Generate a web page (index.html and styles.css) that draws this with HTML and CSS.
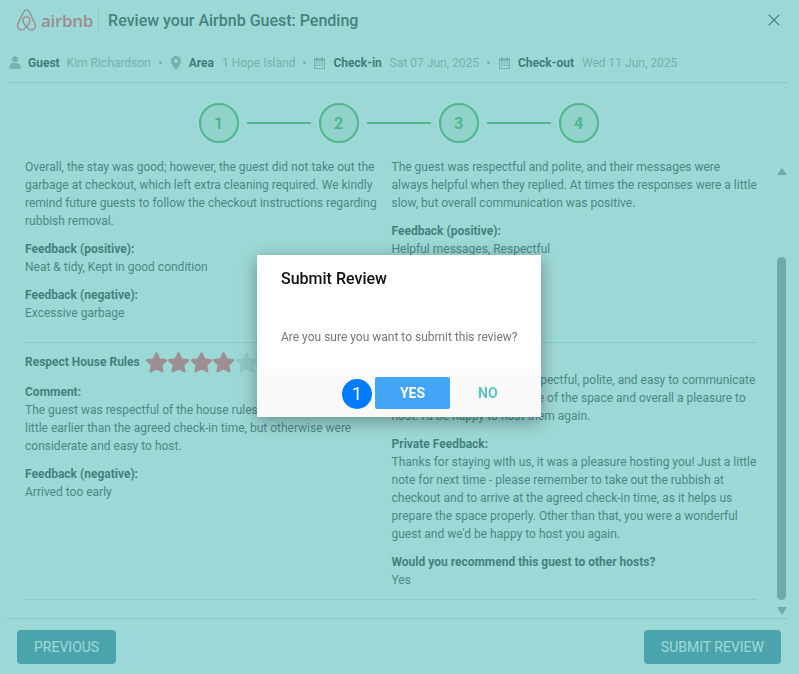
FILE: index.html
```html
<!DOCTYPE html>
<html lang="en">

<head>
    <meta charset="UTF-8">
    <meta name="viewport" content="width=device-width, initial-scale=1.0">
    <title>Review your Airbnb Guest</title>
    <link rel="stylesheet" href="styles.css">
</head>

<body>

    <div class="page">
        <div class="top">
            <div class="brand">
                <svg class="belo" viewBox="0 0 24 24" fill="none" stroke="#ff6b75" stroke-width="1.4">
                    <path d="M12 1.5C10.5 1.5 9.6 2.5 9 3.7L3 16C1.9 18.5 3.5 22.5 7 22.5C9 22.5 10.5 21 12 19.2C13.5 21 15 22.5 17 22.5C20.5 22.5 22.1 18.5 21 16L15 3.7C14.4 2.5 13.5 1.5 12 1.5Z" />
                    <path d="M12 19.2C10 16.7 8.3 14.2 8.3 12.2C8.3 10 10 8.8 12 8.8C14 8.8 15.7 10 15.7 12.2C15.7 14.2 14 16.7 12 19.2Z" />
                </svg>
                <span class="wordmark">airbnb</span>
            </div>
            <h1>Review your Airbnb Guest: Pending</h1>
            <svg class="close" viewBox="0 0 14 14" stroke="#484848" stroke-width="1.5">
                <path d="M1 1L13 13M13 1L1 13" />
            </svg>
        </div>

        <div class="info">
            <svg class="ico ico-person" viewBox="0 0 12 13"><circle cx="6" cy="3.2" r="3" /><path d="M0.5 13V10.5C0.5 8.3 2.3 7 4 7H8C9.7 7 11.500 8.300 11.500 10.500V13Z" /></svg>
            <b class="first">Guest</b><span class="val">Kim Richardson</span><i class="dot wide"></i>
            <svg class="ico ico-pin" viewBox="0 0 10 14"><path fill-rule="evenodd" d="M5 0C2.200 0 0 2.200 0 5C0 8.500 5 14 5 14C5 14 10 8.500 10 5C10 2.200 7.800 0 5 0ZM5 7A2 2 0 1 1 5 3A2 2 0 0 1 5 7Z" /></svg>
            <b>Area</b><span class="val">1 Hope Island</span><i class="dot"></i>
            <svg class="ico ico-cal" viewBox="0 0 11 12"><path fill-rule="evenodd" d="M2 0H3.200V1.200H7.800V0H9V1.200H11V12H0V1.200H2ZM1 4V11H10V4ZM2 5H3.600V6.400H2ZM4.700 5H6.300V6.400H4.700ZM7.400 5H9V6.400H7.400ZM2 7.600H3.600V9H2ZM4.700 7.600H6.300V9H4.700ZM7.400 7.600H9V9H7.400Z" /></svg>
            <b>Check-in</b><span class="val">Sat 07 Jun, 2025</span><i class="dot wide"></i>
            <svg class="ico ico-cal" viewBox="0 0 11 12"><path fill-rule="evenodd" d="M2 0H3.200V1.200H7.800V0H9V1.200H11V12H0V1.200H2ZM1 4V11H10V4ZM2 5H3.600V6.400H2ZM4.700 5H6.300V6.400H4.700ZM7.400 5H9V6.400H7.400ZM2 7.600H3.600V9H2ZM4.700 7.600H6.300V9H4.700ZM7.400 7.600H9V9H7.400Z" /></svg>
            <b>Check-out</b><span class="val">Wed 11 Jun, 2025</span>
        </div>

        <div class="steps">
            <span class="step">1</span><span class="link"></span>
            <span class="step">2</span><span class="link"></span>
            <span class="step">3</span><span class="link"></span>
            <span class="step">4</span>
        </div>

        <div class="body">
            <div class="scroll">
                <div class="row">
                    <div class="col">
                        <p>Overall, the stay was good; however, the guest did not take out the garbage at checkout, which left extra cleaning required. We kindly remind future guests to follow the checkout instructions regarding rubbish removal.</p>
                        <h4>Feedback (positive):</h4>
                        <p>Neat &amp; tidy, Kept in good condition</p>
                        <h4>Feedback (negative):</h4>
                        <p>Excessive garbage</p>
                    </div>
                    <div class="col">
                        <p>The guest was respectful and polite, and their messages were always helpful when they replied. At times the responses were a little slow, but overall communication was positive.</p>
                        <h4>Feedback (positive):</h4>
                        <p>Helpful messages, Respectful</p>
                    </div>
                </div>
                <div class="row last">
                    <div class="col">
                        <div class="rating">
                            <h4>Respect House Rules</h4>
                            <svg class="star on" viewBox="0 0 24 24"><use href="#star" /></svg>
                            <svg class="star on" viewBox="0 0 24 24"><use href="#star" /></svg>
                            <svg class="star on" viewBox="0 0 24 24"><use href="#star" /></svg>
                            <svg class="star on" viewBox="0 0 24 24"><use href="#star" /></svg>
                            <svg class="star" viewBox="0 0 24 24"><use href="#star" /></svg>
                        </div>
                        <h4>Comment:</h4>
                        <p>The guest was respectful of the house rules. They did arrive just a little earlier than the agreed check-in time, but otherwise were considerate and easy to host.</p>
                        <h4>Feedback (negative):</h4>
                        <p>Arrived too early</p>
                    </div>
                    <div class="col">
                        <h4 class="lead">Comment:</h4>
                        <p>The guest has been very respectful, polite, and easy to communicate with. They all took great care of the space and overall a pleasure to host. I'd be happy to host them again.</p>
                        <h4>Private Feedback:</h4>
                        <p>Thanks for staying with us, it was a pleasure hosting you! Just a little note for next time - please remember to take out the rubbish at checkout and to arrive at the agreed check-in time, as it helps us prepare the space properly. Other than that, you were a wonderful guest and we'd be happy to host you again.</p>
                        <h4>Would you recommend this guest to other hosts?</h4>
                        <p>Yes</p>
                    </div>
                </div>
            </div>
            <div class="bar">
                <span class="arrow up"></span>
                <span class="thumb"></span>
                <span class="arrow down"></span>
            </div>
        </div>

        <div class="bottom">
            <button class="btn">PREVIOUS</button>
            <button class="btn">SUBMIT REVIEW</button>
        </div>
    </div>

    <svg class="defs">
        <path id="star" d="M12 2.500L15 8.800L21.800 9.700L16.800 14.400L18.100 21.200L12 17.900L5.900 21.200L7.200 14.400L2.200 9.700L9 8.800Z" stroke-width="2.500" stroke-linejoin="round" />
    </svg>

    <div class="overlay">
        <div class="dialog">
            <h2>Submit Review</h2>
            <p class="ask">Are you sure you want to submit this review?</p>
            <div class="actions">
                <button class="yes">YES<span class="badge">1</span></button>
                <button class="no">NO</button>
            </div>
        </div>
    </div>

</body>

</html>
```

FILE: styles.css
```css
* {
    padding: 0;
    margin: 0;
    box-sizing: border-box;
}

body {
    font-family: Roboto, "Liberation Sans", sans-serif;
    font-size: 12px;
    color: #5c5c5c;
    background-color: #fff;
    overflow: hidden;
}

.page {
    height: 100vh;
    display: flex;
    flex-direction: column;
}

/* header */

.top {
    height: 40px;
    display: flex;
    align-items: center;
    padding: 0 19px 0 15px;
}

.brand {
    display: flex;
    align-items: center;
    height: 24px;
    padding-right: 5px;
    margin-right: 9px;
    border-right: 1px solid #dcdfe4;
}

.belo {
    width: 23px;
    height: 24px;
    margin-right: 3px;
}

.wordmark {
    font-family: "Open Sans", sans-serif;
    font-size: 17px;
    font-weight: 600;
    letter-spacing: -0.3px;
    color: #ff6b75;
}

h1 {
    flex: 1;
    font-size: 16px;
    font-weight: 500;
    color: #505050;
}

.close {
    width: 12px;
    height: 12px;
}

.info {
    height: 43px;
    margin: 0 11px 0 9px;
    display: flex;
    align-items: center;
    border-bottom: 1px solid #dcdfe4;
    padding-top: 3px;
    color: #484848;
}

.info b {
    font-weight: 700;
    margin-left: 8px;
}

.info b.first {
    margin-left: 7px;
}

.val {
    color: #b0b0b0;
    margin-left: 8px;
}

.first + .val {
    margin-left: 7px;
}

.dot {
    width: 3px;
    height: 3px;
    border-radius: 100%;
    background-color: #b0b0b0;
    margin: 0 8px;
}

.dot.wide {
    margin-right: 9px;
}

.ico {
    fill: #b0b0b0;
    flex: none;
}

.ico-person {
    width: 12px;
    height: 13px;
}

.ico-pin {
    width: 10px;
    height: 14px;
}

.ico-cal {
    width: 11px;
    height: 12px;
}

/* stepper */

.steps {
    display: flex;
    align-items: center;
    justify-content: center;
    padding: 4px 2px 0 0;
    height: 76px;
}

.step {
    width: 40px;
    height: 40px;
    border-radius: 100%;
    border: 2px solid #66bb6a;
    background-color: #e8f5e9;
    color: #66bb6a;
    font-size: 16px;
    font-weight: 700;
    display: flex;
    align-items: center;
    justify-content: center;
}

.link {
    width: 64px;
    height: 2px;
    margin: 0 8px;
    background-color: #66bb6a;
}

/* review columns */

.body {
    flex: 1;
    min-height: 0;
    display: flex;
    padding-left: 25px;
}

.scroll {
    width: 732px;
    overflow: hidden;
}

.row {
    display: flex;
    border-bottom: 1px solid #dcdfe4;
    height: 185px;
    margin-top: -1px;
}

.row.last {
    height: 257px;
    margin-top: 0;
    padding-top: 8px;
}

.col {
    width: 367px;
    padding-right: 10px;
}

.col + .col {
    width: 366px;
    padding-right: 0;
}

.col p {
    line-height: 18px;
    margin-bottom: 10px;
}

h4 {
    font-size: 12px;
    font-weight: 700;
    line-height: 18px;
    color: #4f4f4f;
}

h4.lead {
    margin-top: 2px;
}

.rating {
    display: flex;
    align-items: center;
    height: 22px;
    margin-bottom: 10px;
}

.rating h4 {
    margin-right: 5px;
}

.star {
    width: 23px;
    height: 23px;
    margin-right: -0.5px;
    fill: #e0e0e0;
    stroke: #e0e0e0;
}

.star.on {
    fill: #ff6d7a;
    stroke: #ff6d7a;
}

.defs {
    display: none;
}

/* scrollbar */

.bar {
    width: 9px;
    margin: 9px 0 0 20px;
    display: flex;
    flex-direction: column;
    align-items: center;
}

.arrow {
    width: 0;
    height: 0;
    border-left: 5px solid transparent;
    border-right: 5px solid transparent;
}

.arrow.up {
    border-bottom: 7px solid #a3a3a9;
}

.arrow.down {
    border-top: 8px solid #a3a3a9;
}

.thumb {
    width: 9px;
    height: 343px;
    margin: 82px 0 7px;
    border-radius: 5px;
    background-color: #a3a3a9;
}

/* footer */

.bottom {
    height: 56px;
    margin: 0 11px 0 6px;
    padding: 11px 7px 0 11px;
    border-top: 1px solid #dcdfe4;
    display: flex;
    justify-content: space-between;
    align-items: flex-start;
}

.btn {
    height: 34px;
    padding: 0 17px;
    border: 0;
    border-radius: 4px;
    background-color: #5d95ad;
    color: #fff;
    font-family: Roboto, sans-serif;
    font-size: 14px;
}

/* dialog */

.overlay {
    position: fixed;
    top: 0;
    right: 0;
    bottom: 0;
    left: 0;
    padding: 0 1px 2px 0;
    background-color: rgba(57, 177, 171, 0.5);
    display: flex;
    align-items: center;
    justify-content: center;
}

.dialog {
    width: 284px;
    height: 162px;
    background-color: #fff;
    box-shadow: 0 4px 16px rgba(0, 0, 0, 0.35);
    display: flex;
    flex-direction: column;
}

h2 {
    font-size: 16px;
    font-weight: 500;
    line-height: 20px;
    color: #111;
    padding: 14px 24px 0;
}

.ask {
    flex: 1;
    padding: 38px 10px 0 24px;
    color: #757575;
    font-size: 12px;
    line-height: 20px;
}

.actions {
    height: 48px;
    background-color: #fafafa;
    display: flex;
    align-items: center;
    padding-left: 118px;
}

.yes {
    position: relative;
    width: 75px;
    height: 32px;
    border: 0;
    border-radius: 2px;
    background-color: #42a5f5;
    color: #fff;
    font-family: Roboto, sans-serif;
    font-size: 14px;
    font-weight: 700;
}

.no {
    margin-left: 28px;
    border: 0;
    background: none;
    color: #5ac3c8;
    font-family: Roboto, sans-serif;
    font-size: 14px;
    font-weight: 700;
}

.badge {
    position: absolute;
    left: -33px;
    top: 2px;
    width: 30px;
    height: 30px;
    border-radius: 100%;
    background-color: #007bff;
    color: #fff;
    font-size: 18px;
    font-weight: 400;
    line-height: 30px;
    text-align: center;
}
```
